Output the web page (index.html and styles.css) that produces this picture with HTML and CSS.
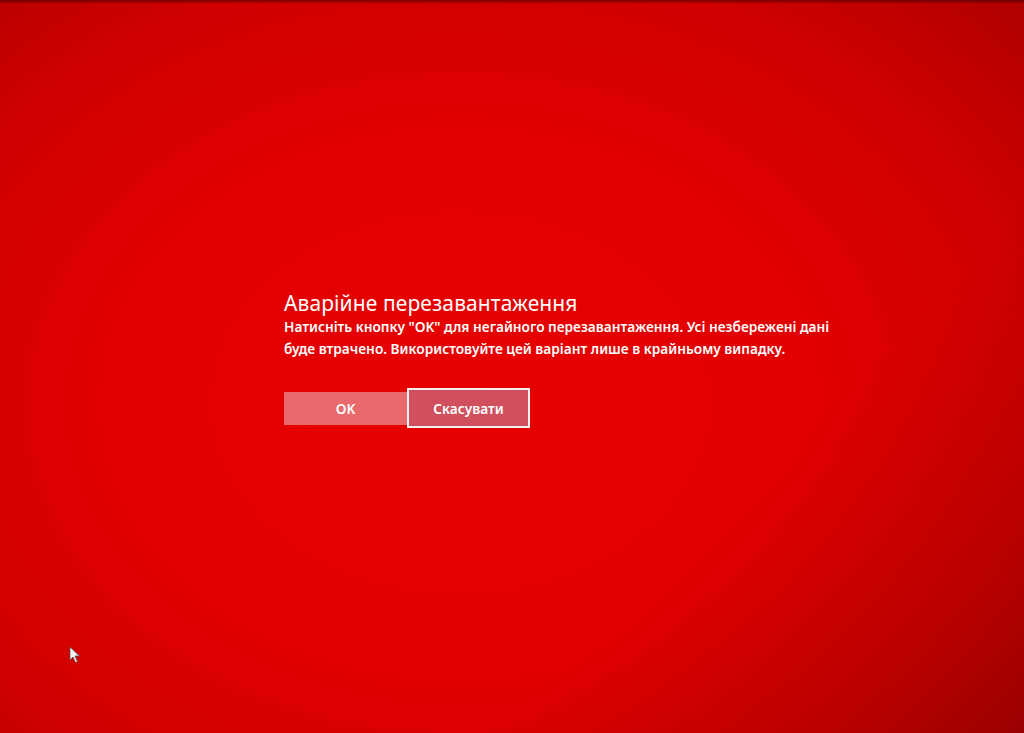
FILE: index.html
```html
<!DOCTYPE html>
<html lang="uk">
<head>
<meta charset="utf-8">
<title>Аварійне перезавантаження</title>
<link rel="stylesheet" href="styles.css">
</head>
<body>
<div class="screen">
  <div class="dialog">
    <h1 class="title">Аварійне перезавантаження</h1>
    <p class="message">Натисніть кнопку "OK" для негайного перезавантаження. Усі незбережені дані<br>буде втрачено. Використовуйте цей варіант лише в крайньому випадку.</p>
    <div class="buttons">
      <button class="btn btn-ok">OK</button>
      <button class="btn btn-cancel">Скасувати</button>
    </div>
  </div>
  <svg class="cursor" width="12" height="18" viewBox="0 0 12 18"><path d="M1 1 L1 14 L4 11 L6.5 16.5 L8.5 15.5 L6 10 L10.5 10 Z" fill="#f4f4f4" stroke="#555" stroke-width="0.8"/></svg>
</div>
</body>
</html>
```
FILE: styles.css
```css
html, body {
  margin: 0;
  padding: 0;
  height: 100%;
}
body {
  font-family: "Noto Sans", "Open Sans", "DejaVu Sans", sans-serif;
  color: #fff;
}
.screen {
  position: relative;
  width: 1024px;
  height: 733px;
  overflow: hidden;
  background:
    linear-gradient(to bottom, rgba(60,0,0,0.6) 0, rgba(60,0,0,0) 4px),
    linear-gradient(135deg, rgba(0,0,0,0) 70%, rgba(60,0,0,0.25) 100%),
    radial-gradient(ellipse 75% 80% at 45% 55%, #e80000 0%, #e20000 45%, #d00000 75%, #b00000 100%);
  box-sizing: border-box;
  padding: 290px 0 0 284px;
}
.dialog {
  width: 600px;
}
.title {
  margin: 0;
  font-weight: 400;
  font-size: 21px;
  line-height: 26px;
  letter-spacing: 0.1px;
}
.message {
  margin: 0;
  font-weight: 600;
  font-size: 13.7px;
  line-height: 22px;
}
.buttons {
  display: flex;
  align-items: center;
  margin-top: 28px;
}
.btn {
  font-family: inherit;
  font-weight: 600;
  font-size: 13.7px;
  color: #fff;
  width: 123px;
  box-sizing: border-box;
  border: none;
  padding: 0;
}
.btn-ok {
  height: 33px;
  background: #e86a6c;
}
.btn-cancel {
  height: 40px;
  background: #d0505e;
  border: 2px solid #f4f0f4;
}
.cursor {
  position: absolute;
  left: 69px;
  top: 646px;
}
```
